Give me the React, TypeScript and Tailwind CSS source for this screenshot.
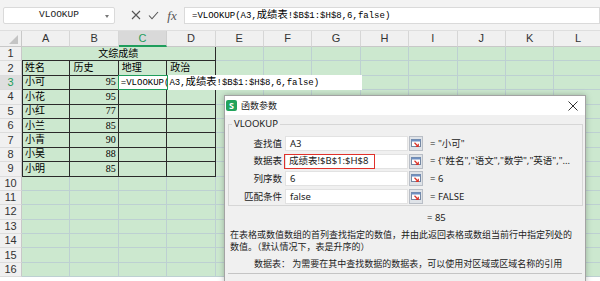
import React from "react";

const cols = ["A", "B", "C", "D", "E", "F", "G", "H", "I", "J", "K", "L"];

const students: [string, string][] = [
  ["小可", "95"],
  ["小花", "95"],
  ["小红", "77"],
  ["小兰", "85"],
  ["小青", "90"],
  ["小吴", "88"],
  ["小明", "85"],
];

const params = [
  { label: "查找值", value: "A3", result: '= "小可"' },
  { label: "数据表", value: "成绩表!$B$1:$H$8", result: '= {"姓名","语文","数学","英语","…', boxed: true },
  { label: "列序数", value: "6", result: "= 6" },
  { label: "匹配条件", value: "false", result: "= FALSE" },
];

const cellFont = "font-['Liberation_Serif','Noto_Sans_CJK_SC',serif]";
const monoFont = "font-['Liberation_Mono','Noto_Sans_CJK_SC',monospace]";
const uiFont = "font-['Noto_Sans','Noto_Sans_CJK_SC',sans-serif]";

function Formula() {
  return (
    <span className={`${monoFont} text-[9px] text-black whitespace-nowrap`}>
      =VLOOKUP(A3,<span className="font-['Noto_Sans_CJK_SC',sans-serif] text-[10.3px]">成绩表</span>!$B$1:$H$8,6,false)
    </span>
  );
}

function RefButton() {
  return (
    <div className="ml-[1px] w-[14px] h-[15px] bg-[#dfe3e8] border border-[#b9bec6] flex items-center justify-center">
      <svg width="10" height="9" viewBox="0 0 10 9">
        <rect x="0.5" y="0.5" width="9" height="7" fill="#fff" stroke="#7588a3" />
        <rect x="0.5" y="0.5" width="9" height="2" fill="#6f8fc2" />
        <path d="M3.5 3.8 L7 7.2" stroke="#d9342b" strokeWidth="1.2" />
        <path d="M7.3 4.8 L7.3 7.4 L4.8 7.4" fill="none" stroke="#d9342b" strokeWidth="1.1" />
      </svg>
    </div>
  );
}

function Dialog() {
  return (
    <div className={`absolute left-[224px] top-[95px] w-[362px] h-[190px] bg-[#f0f0f0] border border-[#a3a3a3] shadow-[0_0_6px_rgba(0,0,0,0.25)] ${uiFont} text-[#222]`}>
      <div className="h-[19px] bg-white flex items-center pl-[1px] pr-[7px]">
        <div className="w-[11px] h-[11px] rounded-[2px] bg-[#22a35c] flex items-center justify-center text-white text-[9px] font-bold leading-none">S</div>
        <span className="ml-[4px] text-[9px] leading-none">函数参数</span>
        <svg className="ml-auto" width="10" height="10" viewBox="0 0 10 10">
          <path d="M0.5 0.5 L9.5 9.5 M9.5 0.5 L0.5 9.5" stroke="#333" strokeWidth="1" />
        </svg>
      </div>
      <fieldset className="mt-[3px] ml-[3px] mr-[2px] border border-[#d6d6d6] pt-[6px] pb-[1px]">
        <legend className="ml-[3px] px-[2px] text-[9.5px] leading-[12px]">VLOOKUP</legend>
        <div className="flex flex-col gap-[2.7px]">
          {params.map((p) => (
            <div key={p.label} className="flex items-center h-[15px]">
              <div className="w-[53px] text-right text-[9.5px] leading-none">{p.label}</div>
              <div className="ml-[3px] w-[123px] h-[15px] bg-white border border-[#e2e2e2] flex items-center text-[9.5px] leading-none">
                {p.boxed ? (
                  <div className="-ml-[2px] w-[91px] h-[15px] border-[1.5px] border-[#e0312b] flex items-center pl-[4px]">{p.value}</div>
                ) : (
                  <span className="pl-[4px]">{p.value}</span>
                )}
              </div>
              <RefButton />
              <div className="ml-[7px] text-[9.5px] leading-none whitespace-nowrap">{p.result}</div>
            </div>
          ))}
        </div>
      </fieldset>
      <div className="mt-[6px] pl-[202px] text-[9.5px] leading-[12px]">= 85</div>
      <div className="mt-[5px] pl-[5px] text-[9px] leading-[12px] whitespace-nowrap">
        <div>在表格或数值数组的首列查找指定的数值，并由此返回表格或数组当前行中指定列处的</div>
        <div>数值。（默认情况下，表是升序的）</div>
      </div>
      <div className="mt-[4.5px] pl-[29px] text-[9px] leading-[12px] whitespace-nowrap">数据表：&nbsp;为需要在其中查找数据的数据表，可以使用对区域或区域名称的引用</div>
      <div className="mt-[3px] mx-[3px] h-px bg-[#c4c4c4]" />
    </div>
  );
}

export default function App() {
  const grid = "border-[#bdd0d2]";
  const dark = "border-[#2a2a2a]";

  const bodyRows: React.ReactNode[] = [];
  for (let r = 1; r <= 16; r++) {
    const selected = r === 3;
    bodyRows.push(
      <div
        key={`h${r}`}
        className={`border-r border-b border-r-[#c8c8c8] border-b-[#dcdcdc] flex items-center justify-center text-[11px] leading-none font-['Liberation_Sans',sans-serif] ${selected ? "bg-[#dedede] text-[#1f9d5c]" : "bg-[#f0f0f0] text-[#333]"}`}
      >
        {r}
      </div>
    );
    if (r === 1) {
      bodyRows.push(
        <div key="m1" className={`col-span-4 bg-[#cce8cf] border-r border-b ${dark} flex items-center justify-center ${cellFont} text-[10px] leading-none`}>
          文综成绩
        </div>
      );
      for (let c = 4; c < 12; c++) {
        bodyRows.push(<div key={`1-${c}`} className={`bg-[#cce8cf] border-r border-b ${grid}`} />);
      }
      continue;
    }
    for (let c = 0; c < 12; c++) {
      const inTable = r <= 9 && c < 4;
      let content: React.ReactNode = null;
      let align = "justify-start pl-[3px]";
      if (r === 2 && c < 4) content = ["姓名", "历史", "地理", "政治"][c];
      if (r >= 3 && r <= 9) {
        if (c === 0) content = students[r - 3][0];
        if (c === 1) {
          content = students[r - 3][1];
          align = "justify-end pr-[2px]";
        }
      }
      const isEdit = r === 3 && c === 2;
      bodyRows.push(
        <div
          key={`${r}-${c}`}
          className={`relative bg-[#cce8cf] border-r border-b ${inTable ? dark : grid} ${inTable && c === 0 ? "shadow-[inset_1px_0_0_#2a2a2a]" : ""} flex items-center ${align} ${cellFont} text-[10px] leading-none text-black`}
        >
          {content}
          {isEdit && (
            <>
              <div className="absolute left-0 -top-px h-[15.4px] w-[243px] bg-white flex items-center pl-[2px] z-10">
                <Formula />
              </div>
              <div className="absolute -left-px -top-px w-[50px] h-[15.4px] border border-[#1f9d5c] z-20" />
            </>
          )}
        </div>
      );
    }
  }

  return (
    <div className="relative w-[600px] h-[281px] overflow-hidden bg-white">
      {/* formula bar */}
      <div className="h-[31px] bg-[#f3f3f3] border-b border-[#dedede] flex items-center">
        <div className="ml-[3px] w-[112px] h-[17px] bg-white border border-[#dadada] rounded-[2px] flex items-center relative">
          <span className={`flex-1 text-center ${monoFont} text-[9.5px] leading-none text-[#222]`}>VLOOKUP</span>
          <svg className="absolute right-[5px] top-[7px]" width="4" height="3" viewBox="0 0 4 3">
            <path d="M0 0 L4 0 L2 3 Z" fill="#777" />
          </svg>
        </div>
        <div className="ml-[14px] w-[13px] flex justify-center">
          <svg width="10" height="10" viewBox="0 0 10 10">
            <path d="M1 1 L9 9 M9 1 L1 9" stroke="#555" strokeWidth="1.1" />
          </svg>
        </div>
        <div className="ml-[5px] w-[13px] flex justify-center">
          <svg width="11" height="9" viewBox="0 0 11 9">
            <path d="M1 4.5 L4 7.8 L10 1" fill="none" stroke="#555" strokeWidth="1.1" />
          </svg>
        </div>
        <div className="ml-[5px] w-[14px] text-center font-['Liberation_Serif',serif] italic text-[13px] leading-none text-[#555]">fx</div>
        <div className="ml-[5px] flex-1 h-[17px] bg-white border border-[#dadada] flex items-center pl-[7px]">
          <Formula />
        </div>
      </div>
      {/* sheet */}
      <div className="grid grid-cols-[22px_repeat(12,48.4px)] grid-rows-[16px_repeat(16,14.4px)]">
        <div className="bg-[#f0f0f0] border-r border-b border-[#c8c8c8] relative">
          <svg className="absolute left-[9px] top-[4px]" width="9" height="9" viewBox="0 0 9 9">
            <path d="M9 0 L9 9 L0 9 Z" fill="#c4c4c4" />
          </svg>
        </div>
        {cols.map((c) => (
          <div
            key={c}
            className={`border-r border-b flex items-center justify-center text-[11px] leading-none font-['Liberation_Sans',sans-serif] ${c === "C" ? "bg-[#d9d9d9] text-[#1f9d5c] border-r-[#cfcfcf] border-b-2 border-b-[#1f9d5c]" : "bg-[#f0f0f0] text-[#333] border-r-[#d6d6d6] border-b-[#c8c8c8]"}`}
          >
            {c}
          </div>
        ))}
        {bodyRows}
      </div>
      <Dialog />
    </div>
  );
}
